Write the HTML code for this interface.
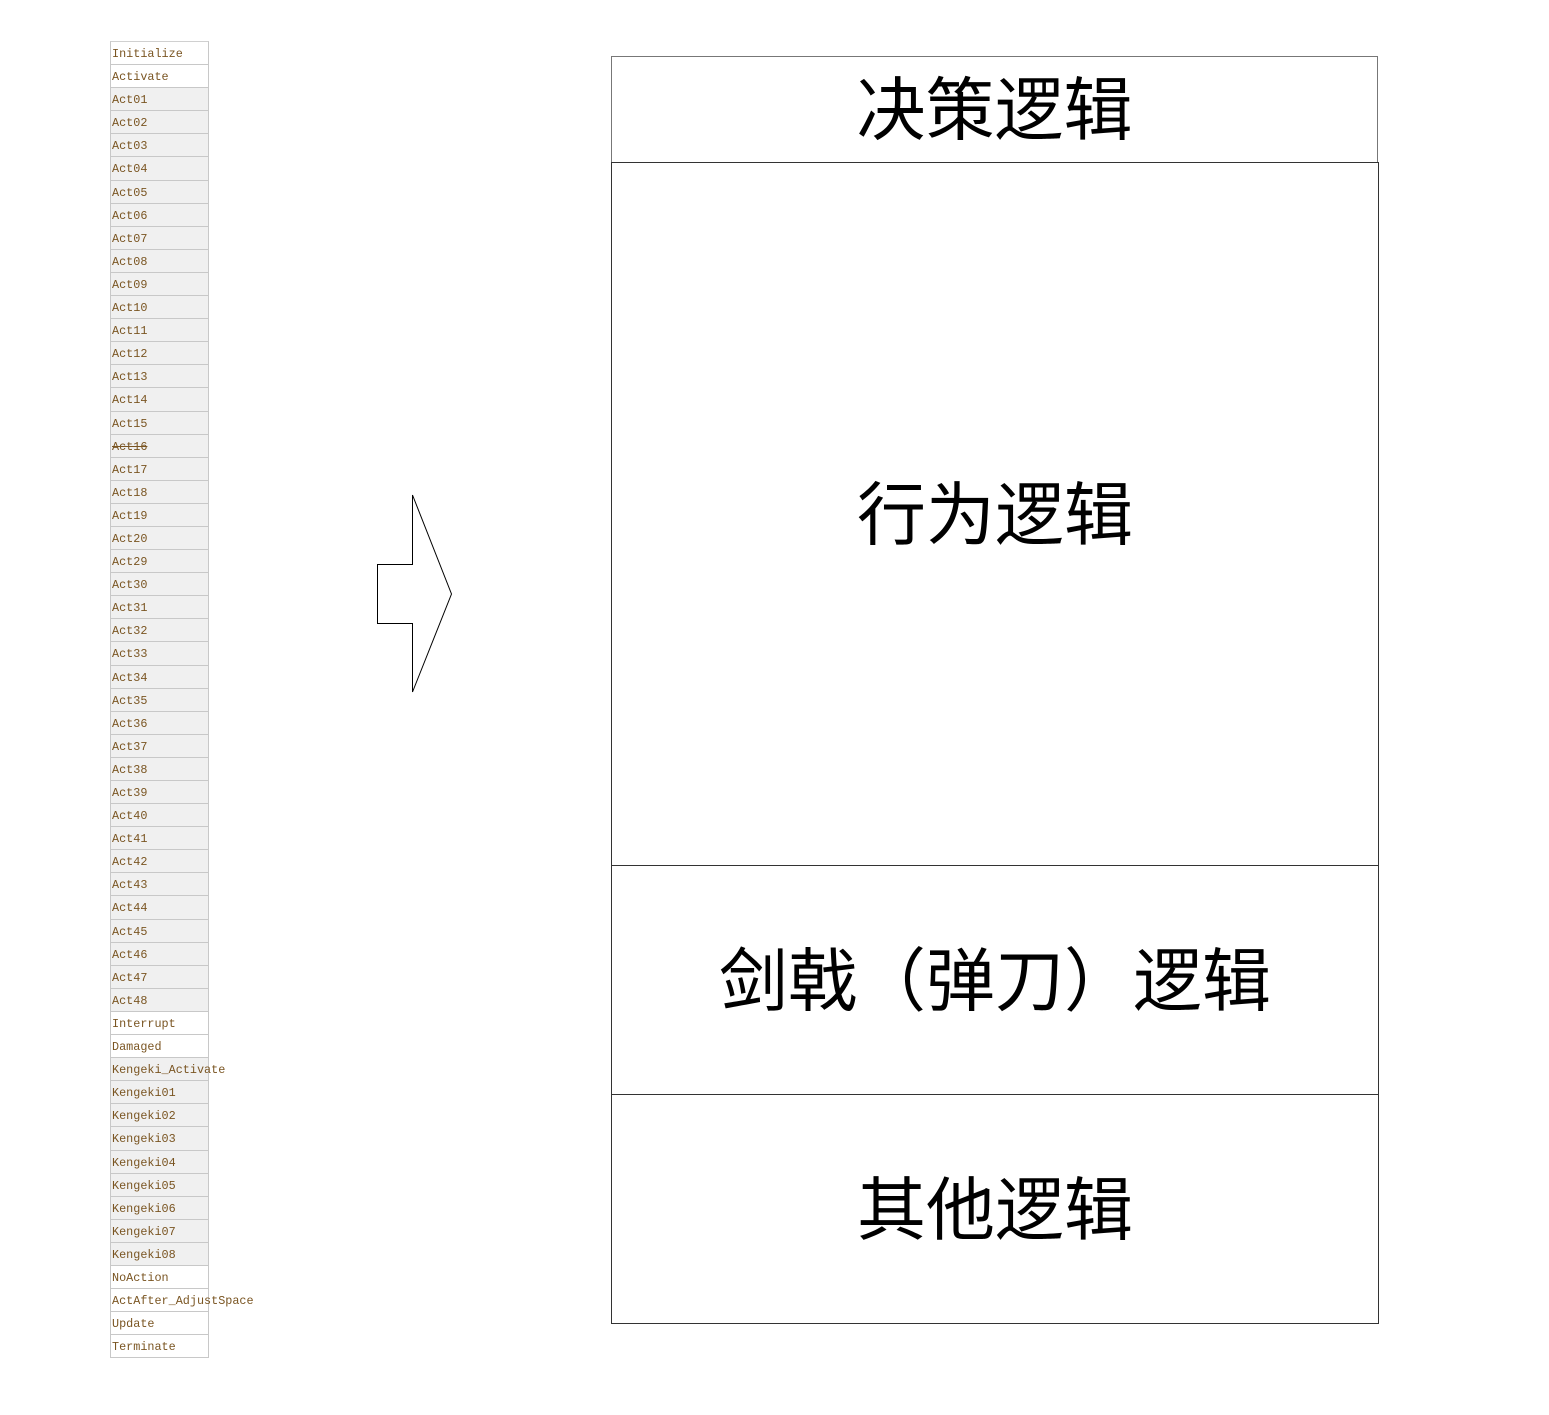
<!DOCTYPE html>
<html><head><meta charset="utf-8"><style>
body{margin:0;width:1549px;height:1415px;background:#fff;position:relative;overflow:hidden}
#list{position:absolute;left:110px;top:41px;width:97px;border-left:1px solid #c8c8c8;border-right:1px solid #c8c8c8;border-top:1px solid #d0d0d0}
#list div{height:22.1px;border-bottom:1px solid #c8c8c8;font-family:"Liberation Mono",monospace;font-size:11.8px;line-height:24px;color:#7a5522;padding-left:1px;white-space:nowrap;background:#f0f0f0}
#list div.w{background:#fff}
.box{position:absolute;border:1px solid #333;box-sizing:border-box;display:flex;align-items:center;justify-content:center;font-family:"Liberation Sans","Noto Sans CJK SC",sans-serif;font-size:69px;color:#000;padding-bottom:11px}
</style></head><body>
<div id="list">
<div class="w">Initialize</div><div class="w">Activate</div>
<div>Act01</div><div>Act02</div><div>Act03</div><div>Act04</div><div>Act05</div><div>Act06</div><div>Act07</div><div>Act08</div><div>Act09</div><div>Act10</div><div>Act11</div><div>Act12</div><div>Act13</div><div>Act14</div><div>Act15</div><div style="text-decoration:line-through">Act16</div><div>Act17</div><div>Act18</div><div>Act19</div><div>Act20</div><div>Act29</div><div>Act30</div><div>Act31</div><div>Act32</div><div>Act33</div><div>Act34</div><div>Act35</div><div>Act36</div><div>Act37</div><div>Act38</div><div>Act39</div><div>Act40</div><div>Act41</div><div>Act42</div><div>Act43</div><div>Act44</div><div>Act45</div><div>Act46</div><div>Act47</div><div>Act48</div>
<div class="w">Interrupt</div><div class="w">Damaged</div>
<div>Kengeki_Activate</div><div>Kengeki01</div><div>Kengeki02</div><div>Kengeki03</div><div>Kengeki04</div><div>Kengeki05</div><div>Kengeki06</div><div>Kengeki07</div><div>Kengeki08</div>
<div class="w">NoAction</div><div class="w">ActAfter_AdjustSpace</div><div class="w">Update</div><div class="w">Terminate</div>
</div>
<svg style="position:absolute;left:0;top:0" width="1549" height="1415"><polygon points="377.5,564.5 412.5,564.5 412.5,495 451.5,594 412.5,692 412.5,623.5 377.5,623.5" fill="#fff" stroke="#000" stroke-width="1"/></svg>
<div class="box" style="left:611px;top:56px;width:767px;height:107px;border-color:#777">决策逻辑</div>
<div class="box" style="left:611px;top:162px;width:768px;height:704px">行为逻辑</div>
<div class="box" style="left:611px;top:865px;width:768px;height:230px">剑戟（弹刀）逻辑</div>
<div class="box" style="left:611px;top:1094px;width:768px;height:230px">其他逻辑</div>
</body></html>
